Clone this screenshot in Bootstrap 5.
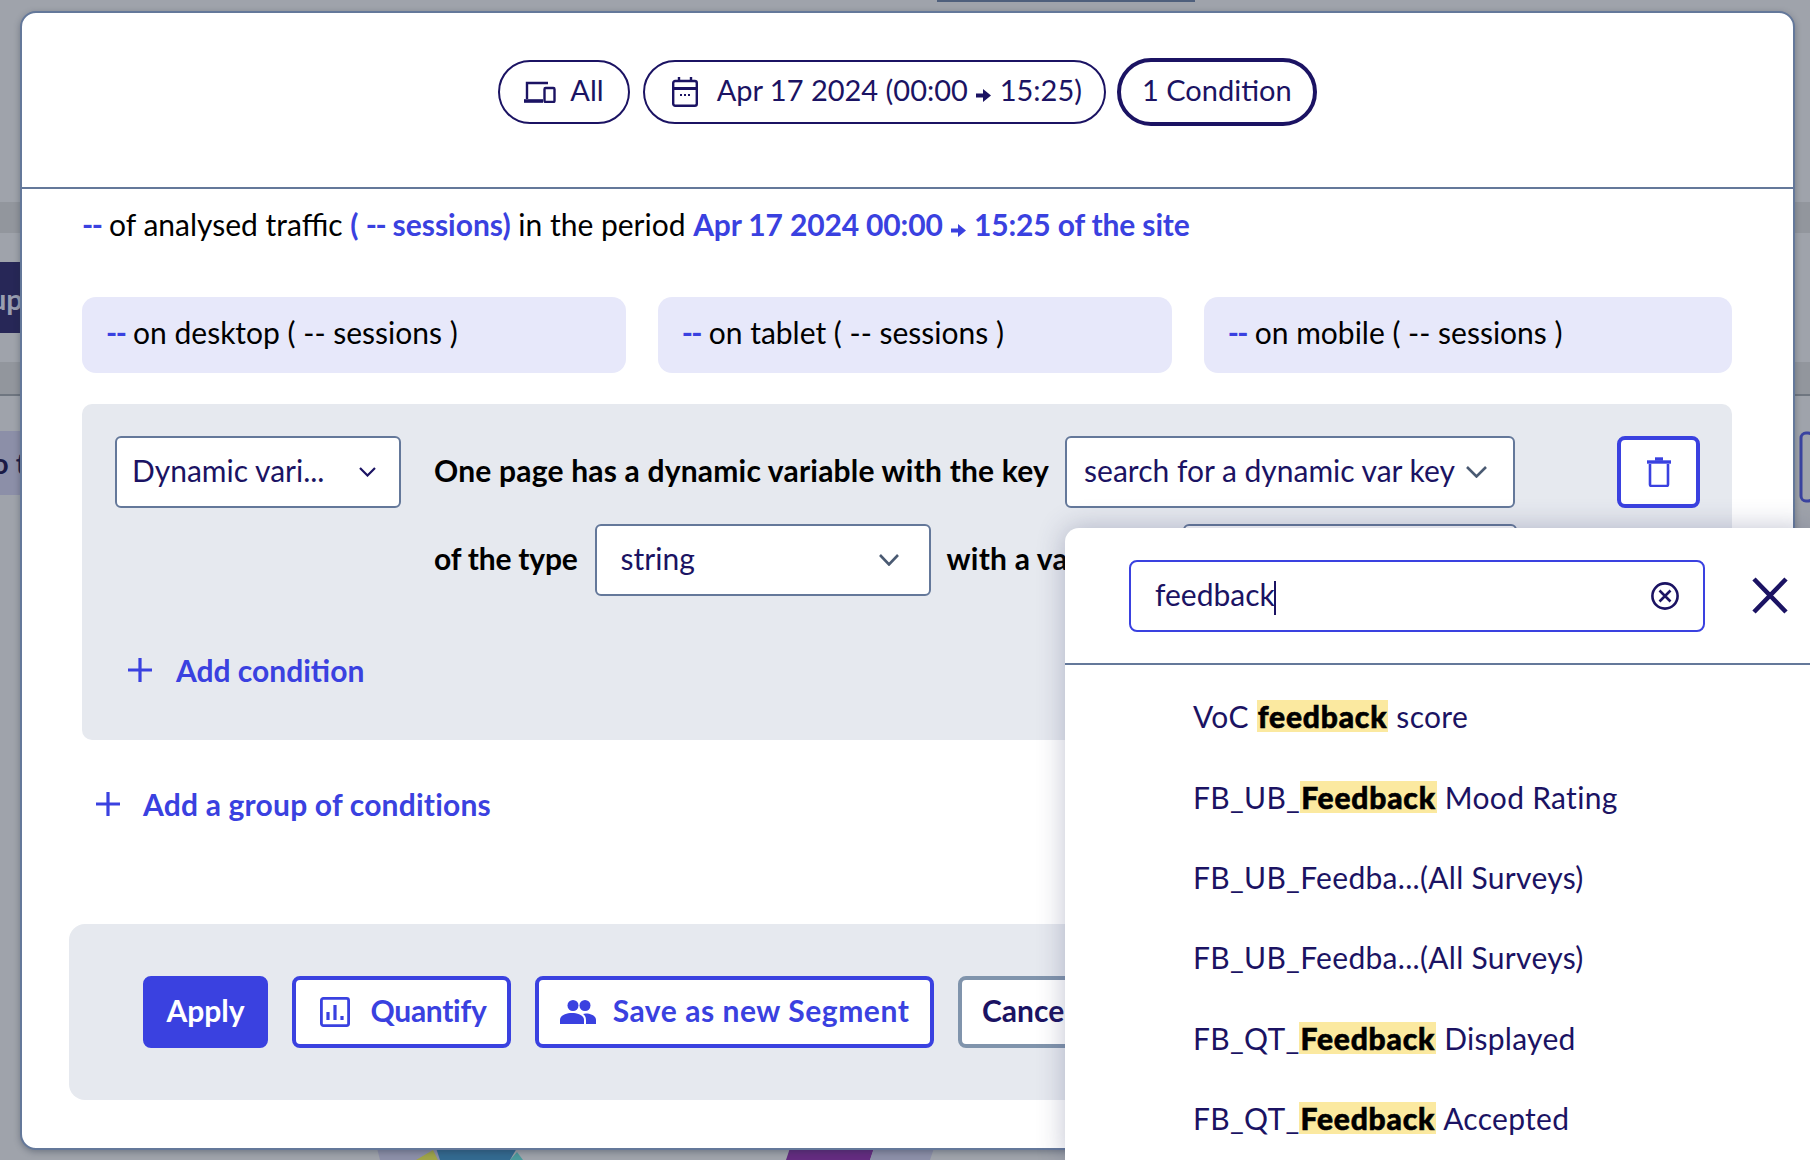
<!DOCTYPE html>
<html lang="en">
<head>
<meta charset="utf-8">
<title>Segment conditions</title>
<link href="https://cdn.jsdelivr.net/npm/bootstrap@5.3.0/dist/css/bootstrap.min.css" rel="stylesheet">
<style>
html,body{height:1160px;overflow:hidden}
body{background:#9fa3ab;font-family:"Lato","Liberation Sans",sans-serif;font-size:30px;line-height:34px;color:#000;position:relative;width:1810px}
svg{display:block;flex:none}
.backdrop-art{position:absolute;left:0;top:0}
.dialog-box{position:relative;margin:11px 15px 0 20px;width:1775px;height:1139px;background:#fff;border:2px solid #64789a;border-radius:16px;box-shadow:0 2px 6px rgba(30,40,60,.35)}
.dialog-head{height:176px;border-bottom:2px solid #64789a;padding-top:45px}
.pill-btn{height:64px;border:2px solid #1b1363;border-radius:32px;color:#1b1363;background:#fff;padding:0 24px;font-size:29px}
.pill-all{margin-right:13px;padding:0 24px}
.pill-gap{margin-left:14px}
.pill-date{margin-right:11px;padding:0 22px 0 27px}
.pill-on{height:68px;border-width:4px;border-radius:34px;padding:0 21px 4px}
.lift-s{margin-bottom:4px}
.lift-m{margin-bottom:5px}
.lift-l{margin-bottom:6px}
.dialog-main{padding:18px 61px 0 60px}
.blue-t{color:#3a41e0}
.b-t{font-weight:700}
.sp-t{letter-spacing:.2px}
.tight-t{letter-spacing:-.2px}
.date-t{letter-spacing:-.15px}
.dash-t{letter-spacing:-1.5px}
.arrow-ico{display:inline-block;vertical-align:-.02em;margin:0 1px}
.dev-row{margin-top:56px;gap:32px}
.dev-box{height:76px;background:#e7e8fa;border-radius:14px;padding-left:24px}
.dev-a{flex:544 1 0}.dev-b{flex:513 1 0}.dev-c{flex:528 1 0}
.cond-panel{margin-top:31px;height:336px;background:#e6e9ef;border-radius:10px;padding:32px 32px 32px 33px}
.sel-box{height:72px;border:2px solid #64789a;border-radius:6px;background:#fff;color:#1b1363;flex:none}
.sel-a{width:286px;padding:0 23px 0 15px;margin-right:33px}
.sel-b{width:450px;padding:0 26px 0 17px;margin-left:16px}
.sel-c{width:336px;padding:0 30px 0 24px;margin:0 16px 0 17px}
.sel-d{width:334px;margin-left:16px}
.val-label{width:220px;flex:none;white-space:nowrap}
.trash-btn{width:83px;height:72px;border:4px solid #3a41e0;border-radius:8px;background:#fff;margin-left:auto;padding:0}
.row-two{margin-top:16px;padding-left:319px}
.add-cond{margin-top:57px;padding-left:13px;gap:24px}
.add-group{margin-top:47px;padding-left:14px;gap:23px}
.foot-panel{margin:103px 0 0 -13px;height:176px;width:1676px;background:#e6e9ef;border-radius:16px;padding:52px 0 0 74px;gap:24px}
.act-btn{height:72px;border:4px solid #3a41e0;border-radius:8px;background:#fff;color:#3a41e0;font-weight:700;font-size:30px;padding:0}
.act-apply{width:125px;background:#3a41e0;color:#fff;padding-bottom:5px}
.act-quant{width:219px;gap:21px;letter-spacing:-.3px;padding-left:3px}
.act-save{width:399px;gap:17px;letter-spacing:.55px}
.act-cancel{padding:0 20px 5px;border-color:#8094ac;color:#1b1363}
.pop-panel{position:absolute;left:1065px;top:528px;right:0;bottom:0;background:#fff;border-top-left-radius:14px;box-shadow:0 0 28px rgba(60,65,110,.32);overflow:hidden}
.pop-top{height:137px;border-bottom:2px solid #64789a;padding:32px 22px 0 64px}
.pop-input{width:576px;height:72px;border:2px solid #3a41e0;border-radius:8px;color:#1b1363;padding:0 24px 0 24px}
.caret-bar{display:inline-block;width:2px;height:34px;background:#1b1363;vertical-align:middle;margin-left:-1px}
.pop-list{padding:0;margin:11px 0 0;list-style:none;color:#1b1363;letter-spacing:.3px}
.pop-item{height:80.4px;padding-left:128px;display:flex;align-items:center;white-space:pre}
.hl-mark{background:#fbe9a0;color:#000;font-weight:900;line-height:32px;padding:0 1px;letter-spacing:.8px;-webkit-text-stroke:.6px #000}
</style>
</head>
<body>
<svg class="backdrop-art" width="1810" height="1160" viewBox="0 0 1810 1160" aria-hidden="true">
  <rect x="937" y="0" width="258" height="2" fill="#4e5f7c"/>
  <rect x="0" y="202" width="20" height="31" fill="#92969d"/>
  <rect x="1793" y="202" width="17" height="31" fill="#92969d"/>
  <rect x="0" y="262" width="20" height="71" fill="#272757"/>
  <rect x="0" y="362" width="20" height="33" fill="#92969d"/>
  <rect x="0" y="394" width="20" height="2" fill="#6f7680"/>
  <rect x="1793" y="362" width="17" height="33" fill="#92969d"/>
  <rect x="1793" y="394" width="17" height="2" fill="#6f7680"/>
  <rect x="0" y="431" width="20" height="64" fill="#8c8fa8"/>
  <rect x="1801" y="433" width="12" height="68" rx="5" fill="none" stroke="#3a43a0" stroke-width="3"/>
  <text x="-10" y="310" font-family="Lato" font-weight="700" font-size="29" fill="#9a9eb0">up</text>
  <text x="-8" y="474" font-family="Lato" font-weight="700" font-size="29" fill="#1b1a45">o t</text>
  <polygon points="377,1148 490,1148 460,1160 380,1160" fill="#8c8fa8"/>
  <polygon points="436,1148 517,1148 510,1160 440,1160" fill="#336a90"/>
  <polygon points="510,1160 517,1152 523,1160" fill="#4b9a9c"/>
  <polygon points="416,1160 433,1150 438,1160" fill="#a0a548"/>
  <polygon points="790,1148 874,1148 870,1160 786,1160" fill="#642c80"/>
  <polygon points="874,1148 934,1148 930,1160 870,1160" fill="#8c8fa8"/>
</svg>

<div class="dialog-box">
  <div class="dialog-head d-flex justify-content-center align-items-start">
    <div class="d-flex align-items-center">
      <button class="pill-btn pill-all d-flex align-items-center" type="button">
        <svg width="32" height="22" viewBox="0 0 32 22" fill="none" stroke="#1b1363" stroke-width="2.4"><path d="M3 18V2h21"/><path d="M0 20h19" stroke-width="3.6"/><rect x="20.500" y="7" width="10" height="14" rx="1.200"/></svg>
        <span class="pill-gap lift-s">All</span>
      </button>
      <button class="pill-btn pill-date d-flex align-items-center" type="button">
        <svg width="26" height="30" viewBox="0 0 26 30" fill="none" stroke="#1b1363" stroke-width="2.4"><rect x="1.200" y="4" width="23.600" height="24.800" rx="2"/><path d="M1 11.500h24" stroke-width="3"/><path d="M7 0v5M19 0v5"/><path d="M8 18h2M12 18h2M16 18h2" stroke-width="2"/></svg>
        <span class="text-nowrap lift-s" style="margin-left:19px">Apr 17 2024 (00:00 <svg class="arrow-ico" width="15" height="13" viewBox="0 0 15 13" fill="#1b1363"><path d="M0 4.500h7V0l8 6.500-8 6.500V8.500H0z"/></svg> 15:25)</span>
      </button>
      <button class="pill-btn pill-on" type="button">1 Condition</button>
    </div>
  </div>

  <div class="dialog-main">
    <div class="text-nowrap"><span class="blue-t b-t dash-t">--</span> of analysed traffic <span class="blue-t b-t">( <span class="dash-t">--</span> sessions)</span> in the period <span class="blue-t b-t date-t">Apr 17 2024 00:00 <svg class="arrow-ico" width="15" height="13" viewBox="0 0 15 13" fill="#3a41e0"><path d="M0 4.500h7V0l8 6.500-8 6.500V8.500H0z"/></svg> 15:25 of the site</span></div>

    <div class="dev-row d-flex">
      <div class="dev-box dev-a d-flex align-items-center"><span class="lift-l"><span class="blue-t b-t dash-t">--</span> on desktop ( -- sessions )</span></div>
      <div class="dev-box dev-b d-flex align-items-center"><span class="lift-l"><span class="blue-t b-t dash-t">--</span> on tablet ( -- sessions )</span></div>
      <div class="dev-box dev-c d-flex align-items-center"><span class="lift-l"><span class="blue-t b-t dash-t">--</span> on mobile ( -- sessions )</span></div>
    </div>

    <div class="cond-panel">
      <div class="d-flex align-items-center">
        <div class="sel-box sel-a d-flex align-items-center justify-content-between"><span class="lift-s">Dynamic vari...</span>
          <svg width="17" height="10" viewBox="0 0 17 10" fill="none" stroke="#1b1363" stroke-width="2.2"><path d="M1 1l7.500 7.500L16 1"/></svg>
        </div>
        <span class="b-t sp-t text-nowrap lift-s">One page has a dynamic variable with the key</span>
        <div class="sel-box sel-b d-flex align-items-center justify-content-between"><span class="text-nowrap lift-s">search for a dynamic var key</span>
          <svg width="21" height="12" viewBox="0 0 21 12" fill="none" stroke="#4a5a72" stroke-width="2.6"><path d="M1 1l9.500 9.500L20 1"/></svg>
        </div>
        <button class="trash-btn d-flex align-items-center justify-content-center" type="button" aria-label="Delete">
          <svg width="24" height="30" viewBox="0 0 24 30" fill="none" stroke="#3a41e0" stroke-width="2.6"><path d="M0 5h24" stroke-width="3.4"/><path d="M8 2h8" stroke-width="3.4"/><path d="M3 7v20.500a1.500 1.500 0 0 0 1.500 1.500h15a1.500 1.500 0 0 0 1.500-1.500V7"/></svg>
        </button>
      </div>
      <div class="row-two d-flex align-items-center">
        <span class="b-t tight-t text-nowrap lift-s">of the type</span>
        <div class="sel-box sel-c d-flex align-items-center justify-content-between"><span class="lift-s">string</span>
          <svg width="20" height="12" viewBox="0 0 20 12" fill="none" stroke="#4a5a72" stroke-width="2.6"><path d="M1 1l9 9.500L19 1"/></svg>
        </div>
        <span class="b-t sp-t val-label lift-s">with a value</span>
        <div class="sel-box sel-d"></div>
      </div>
      <div class="add-cond d-flex align-items-center blue-t b-t">
        <svg width="24" height="24" viewBox="0 0 24 24" stroke="#3a41e0" stroke-width="3.2"><path d="M12 0v24M0 12h24"/></svg>
        <span>Add condition</span>
      </div>
    </div>

    <div class="add-group d-flex align-items-center blue-t b-t">
      <svg width="24" height="24" viewBox="0 0 24 24" stroke="#3a41e0" stroke-width="3.2"><path d="M12 0v24M0 12h24"/></svg>
      <span class="sp-t">Add a group of conditions</span>
    </div>

    <div class="foot-panel d-flex align-items-start">
      <button class="act-btn act-apply" type="button">Apply</button>
      <button class="act-btn act-quant d-flex align-items-center justify-content-center" type="button">
        <svg width="30" height="30" viewBox="0 0 30 30" fill="none" stroke="#3a41e0" stroke-width="2.8"><rect x="1.400" y="1.400" width="27.200" height="27.200" rx="2"/><path d="M8 23v-8M15 23V8M22 23v-4" stroke-width="3.2"/></svg>
        <span class="lift-m">Quantify</span>
      </button>
      <button class="act-btn act-save d-flex align-items-center justify-content-center" type="button">
        <svg width="36" height="24" viewBox="0 0 36 24" fill="#3a41e0"><circle cx="13" cy="5.500" r="5.500"/><circle cx="25" cy="5.500" r="5.500"/><path d="M0 24v-4c0-4.500 6-7 12-7s12 2.500 12 7v4z"/><path d="M26 24v-4c0-2.500-1-4.500-3-6 1-.3 2-.5 3-.5 5 0 10 2.500 10 6.500v4z"/></svg>
        <span class="lift-m">Save as new Segment</span>
      </button>
      <button class="act-btn act-cancel" type="button">Cancel</button>
    </div>
  </div>
</div>

<div class="pop-panel">
  <div class="pop-top d-flex align-items-start">
    <div class="pop-input d-flex align-items-center justify-content-between">
      <span>feedback<span class="caret-bar"></span></span>
      <svg width="28" height="28" viewBox="0 0 28 28" fill="none" stroke="#1b1363" stroke-width="2.6"><circle cx="14" cy="14" r="12.600"/><path d="M8.500 8.500l11 11M19.500 8.500l-11 11"/></svg>
    </div>
    <svg class="ms-auto" style="margin-top:17px" width="36" height="37" viewBox="0 0 36 37" stroke="#1b1363" stroke-width="4.600"><path d="M2 2l32 33M34 2L2 35"/></svg>
  </div>
  <ul class="pop-list">
    <li class="pop-item">VoC <span class="hl-mark">feedback</span> score</li>
    <li class="pop-item">FB_UB_<span class="hl-mark">Feedback</span> Mood Rating</li>
    <li class="pop-item">FB_UB_Feedba...(All Surveys)</li>
    <li class="pop-item">FB_UB_Feedba...(All Surveys)</li>
    <li class="pop-item">FB_QT_<span class="hl-mark">Feedback</span> Displayed</li>
    <li class="pop-item">FB_QT_<span class="hl-mark">Feedback</span> Accepted</li>
  </ul>
</div>
<script src="https://cdn.jsdelivr.net/npm/bootstrap@5.3.0/dist/js/bootstrap.bundle.min.js"></script>
</body>
</html>
